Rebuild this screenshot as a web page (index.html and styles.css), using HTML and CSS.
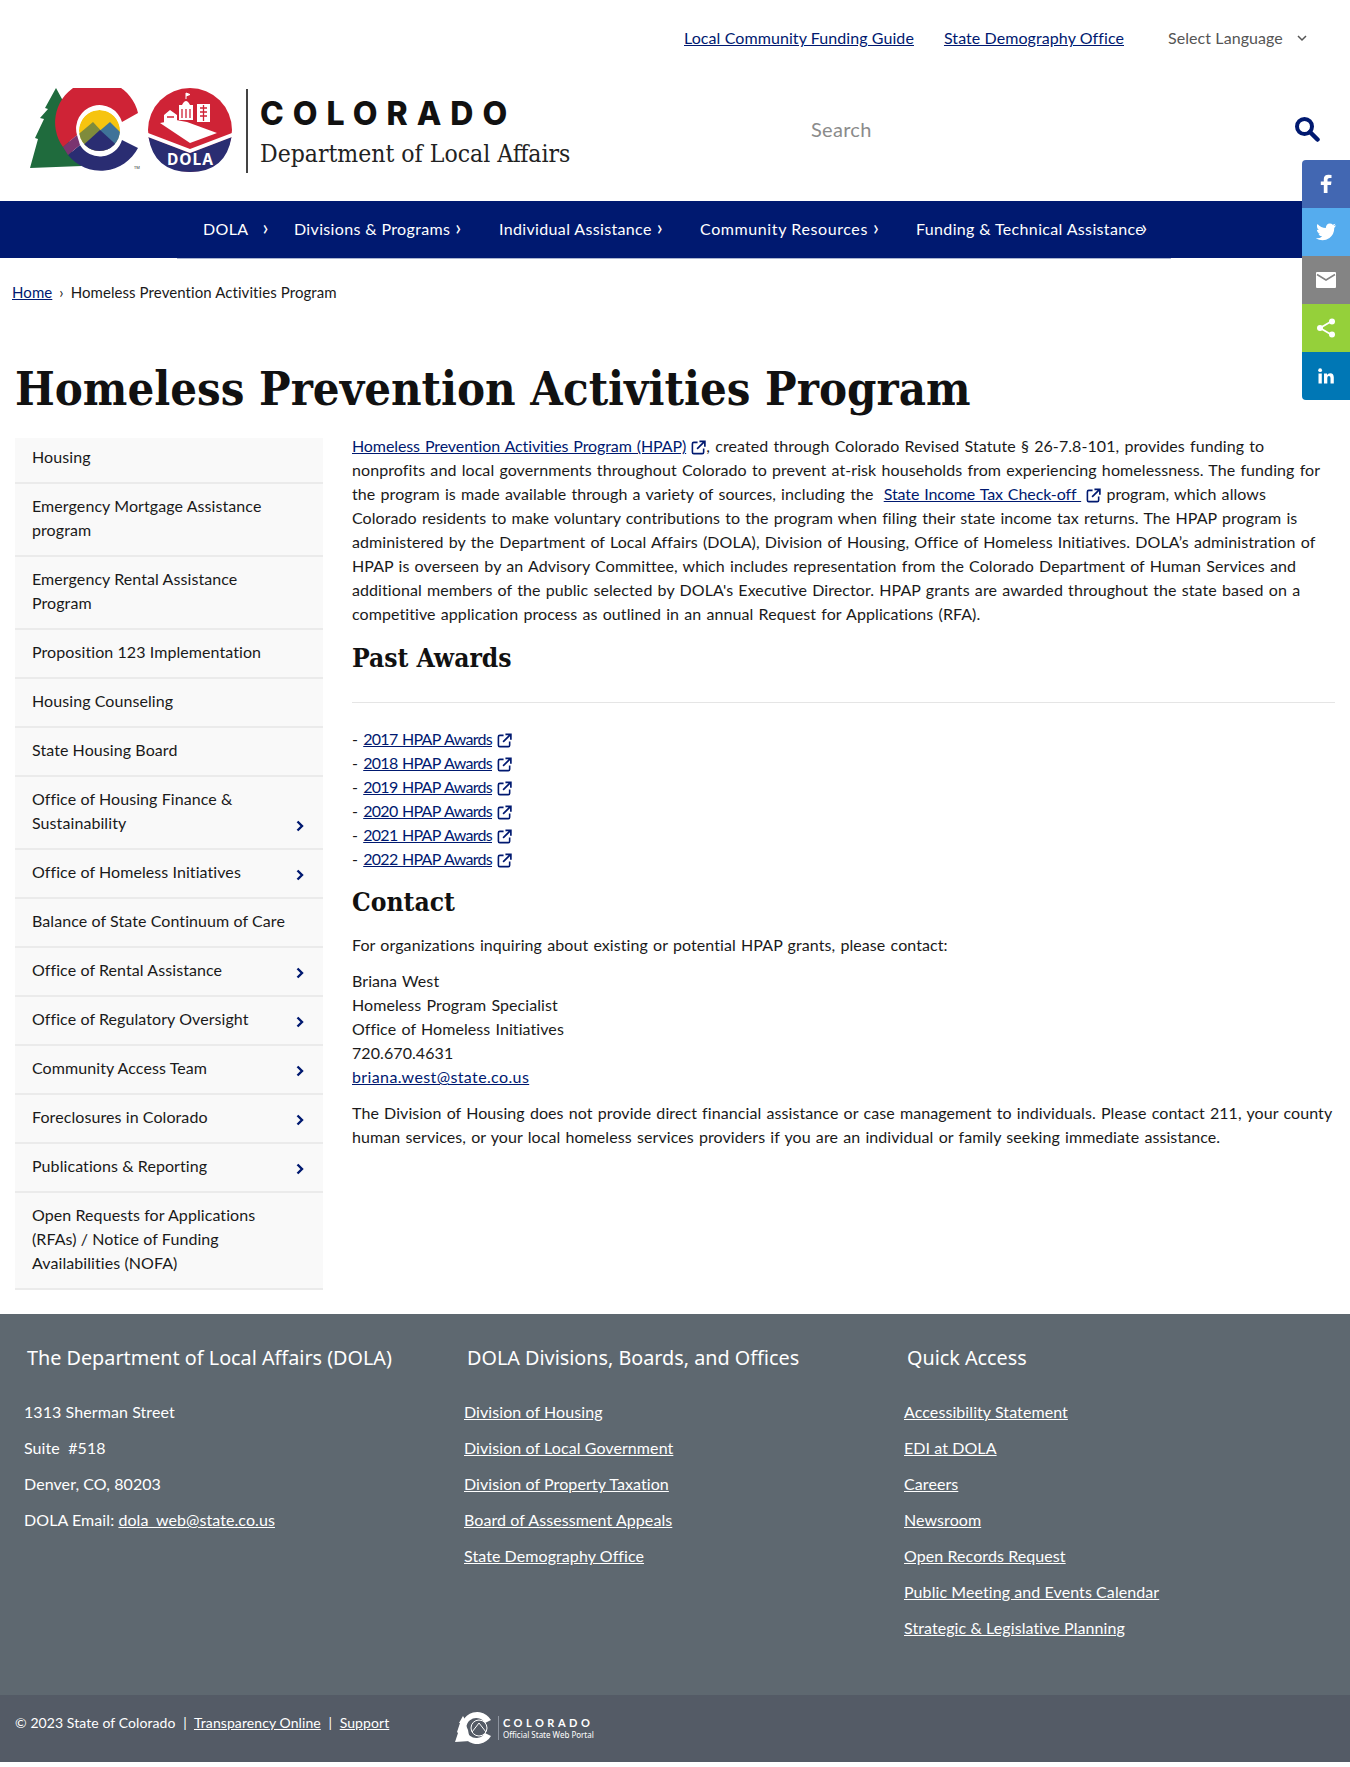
FILE: index.html
```html
<!DOCTYPE html>
<html lang="en">
<head>
    <meta charset="UTF-8">
    <meta name="viewport" content="width=device-width, initial-scale=1.0">
    <title>Homeless Prevention Activities Program</title>
    <link rel="stylesheet" href="styles.css">
</head>
<body>
    <svg class="icon-defs" width="0" height="0" aria-hidden="true">
        <symbol id="ext" viewBox="0 0 16 16">
            <path d="M7 2.500H3Q1.500 2.500 1.500 4V13Q1.500 14.500 3 14.500H12Q13.500 14.500 13.500 13V9" fill="none" stroke="currentColor" stroke-width="1.700"/>
            <path d="M6.500 9.500L14 2M9 1.500H14.800V7.300" fill="none" stroke="currentColor" stroke-width="1.800"/>
        </symbol>
        <symbol id="chev" viewBox="0 0 10 12">
            <path d="M2.500 1.500L7 6L2.500 10.500" fill="none" stroke="currentColor" stroke-width="2.400"/>
        </symbol>
        <clipPath id="peaks"><circle cx="69.500" cy="42.500" r="20.500"/></clipPath>
    </svg>

    <div class="top-links">
        <a href="#">Local Community Funding Guide</a>
        <a href="#">State Demography Office</a>
        <div class="lang">Select Language
            <svg width="10" height="7" viewBox="0 0 10 7"><path d="M1 1L5 5L9 1" fill="none" stroke="#555" stroke-width="1.500"/></svg>
        </div>
    </div>

    <header class="masthead">
        <div class="logo">
            <svg class="logo-mark" width="212" height="85" viewBox="0 0 212 85">
                <!-- tree -->
                <path d="M26 0L38 22L40 60L52 78L0 80L8 51L5 50L14 31L10 30L18 21L15 20Z" fill="#1f6b3d"/>
                <!-- C -->
                <path d="M108 25A42 42 0 1 0 33 59L47 47A23 23 0 0 1 92 34Z" fill="#cf2336"/>
                <path d="M108 60A42 42 0 0 1 38 67L50 57A23 23 0 0 0 92 52Z" fill="#2a2d72"/>
                <path d="M33 59L47 47L50 57L38 67Z" fill="#7a3470"/>
                <!-- mountains -->
                <g clip-path="url(#peaks)">
                    <circle cx="69.500" cy="42.500" r="20.500" fill="#f6c40f"/>
                    <path d="M44 50L63 34L76 48L62 66Z" fill="#7f8b3c"/>
                    <path d="M66 46L80 34L96 50L80 66Z" fill="#3f7398"/>
                    <path d="M48 62L70 42L92 62L70 70Z" fill="#2a2d72"/>
                </g>
                <text x="104" y="81" class="tm">TM</text>
                <!-- seal -->
                <circle cx="160" cy="42" r="42" fill="#cf2336"/>
                <path d="M118.500 49L160 65L201.500 49Q196 84 160 84Q124 84 118.500 49Z" fill="#2a2d72"/>
                <path d="M118 45L160 61L202 45V49L160 65L118 49Z" fill="#fff"/>
                <path d="M130 35L146 32L157 34L187 45L160 55Z" fill="#fff"/>
                <path d="M149 17H163V32H149ZM167 16H180V34H167ZM134 27L140 22L147 27V35H134Z" fill="#fff"/>
                <path d="M152 17Q156 9 160 17Z" fill="#fff"/>
                <path d="M156 11V5L160 6.500L156 8" fill="#fff" stroke="#fff"/>
                <path d="M152 21V30M156 21V30M160 21V30M170 20H177M170 24H177M170 28H177M173.500 17V33M137 29H144" stroke="#cf2336" stroke-width="1.300"/>
                <text x="160.500" y="77" class="seal-text" text-anchor="middle">DOLA</text>
            </svg>
            <div class="logo-text">
                <div class="logo-state">COLORADO</div>
                <div class="logo-dept">Department of Local Affairs</div>
            </div>
        </div>
        <div class="search">
            <span class="search-label">Search</span>
            <svg width="26" height="26" viewBox="0 0 26 26"><circle cx="10.500" cy="10.500" r="7.500" fill="none" stroke="#001970" stroke-width="4"/><path d="M16 16L23.500 23.500" stroke="#001970" stroke-width="4.500" stroke-linecap="round"/></svg>
        </div>
    </header>

    <nav class="main-nav">
        <a href="#" class="n1">DOLA</a>
        <a href="#" class="n2">Divisions &amp; Programs</a>
        <a href="#" class="n3">Individual Assistance</a>
        <a href="#" class="n4">Community Resources</a>
        <a href="#" class="n5">Funding &amp; Technical Assistance</a>
    </nav>

    <div class="breadcrumb"><a href="#">Home</a><span class="sep">›</span>Homeless Prevention Activities Program</div>

    <h1>Homeless Prevention Activities Program</h1>

    <div class="layout">
        <ul class="side">
            <li>Housing</li>
            <li>Emergency Mortgage Assistance program</li>
            <li>Emergency Rental Assistance Program</li>
            <li>Proposition 123 Implementation</li>
            <li>Housing Counseling</li>
            <li>State Housing Board</li>
            <li class="more">Office of Housing Finance &amp; Sustainability<svg><use href="#chev"/></svg></li>
            <li class="more">Office of Homeless Initiatives<svg><use href="#chev"/></svg></li>
            <li>Balance of State Continuum of Care</li>
            <li class="more">Office of Rental Assistance<svg><use href="#chev"/></svg></li>
            <li class="more">Office of Regulatory Oversight<svg><use href="#chev"/></svg></li>
            <li class="more">Community Access Team<svg><use href="#chev"/></svg></li>
            <li class="more">Foreclosures in Colorado<svg><use href="#chev"/></svg></li>
            <li class="more">Publications &amp; Reporting<svg><use href="#chev"/></svg></li>
            <li>Open Requests for Applications (RFAs) / Notice of Funding Availabilities (NOFA)</li>
        </ul>
        <main class="content">
            <p class="intro"><a href="#">Homeless Prevention Activities Program (HPAP)</a> <svg class="ext"><use href="#ext"/></svg>, created through Colorado Revised Statute § 26-7.8-101, provides funding to nonprofits and local governments throughout Colorado to prevent at-risk households from experiencing homelessness. The funding for the program is made available through a variety of sources, including the <a href="#" class="tax">State Income Tax Check-off&nbsp;</a> <svg class="ext tax-ext"><use href="#ext"/></svg>program, which allows Colorado residents to make voluntary contributions to the program when filing their state income tax returns. The HPAP program is administered by the Department of Local Affairs (DOLA), Division of Housing, Office of Homeless Initiatives. DOLA’s administration of HPAP is overseen by an Advisory Committee, which includes representation from the Colorado Department of Human Services and additional members of the public selected by DOLA's Executive Director. HPAP grants are awarded throughout the state based on a competitive application process as outlined in an annual Request for Applications (RFA).</p>
            <h2>Past Awards</h2>
            <hr>
            <p class="awards">
                - <a href="#">2017 HPAP Awards</a> <svg class="ext"><use href="#ext"/></svg><br>
                - <a href="#">2018 HPAP Awards</a> <svg class="ext"><use href="#ext"/></svg><br>
                - <a href="#">2019 HPAP Awards</a> <svg class="ext"><use href="#ext"/></svg><br>
                - <a href="#">2020 HPAP Awards</a> <svg class="ext"><use href="#ext"/></svg><br>
                - <a href="#">2021 HPAP Awards</a> <svg class="ext"><use href="#ext"/></svg><br>
                - <a href="#">2022 HPAP Awards</a> <svg class="ext"><use href="#ext"/></svg>
            </p>
            <h2 class="contact">Contact</h2>
            <p>For organizations inquiring about existing or potential HPAP grants, please contact:</p>
            <p>Briana West<br>Homeless Program Specialist<br>Office of Homeless Initiatives<br>720.670.4631<br><a href="#" class="mail">briana.west@state.co.us</a></p>
            <p>The Division of Housing does not provide direct financial assistance or case management to individuals. Please contact 211, your county human services, or your local homeless services providers if you are an individual or family seeking immediate assistance.</p>
        </main>
    </div>

    <footer class="site-footer">
        <div class="foot-cols">
            <div class="foot-col">
                <h3>The Department of Local Affairs (DOLA)</h3>
                <div>1313 Sherman Street</div>
                <div>Suite &nbsp;#518</div>
                <div>Denver, CO, 80203</div>
                <div>DOLA Email: <a href="#">dola_web@state.co.us</a></div>
            </div>
            <div class="foot-col">
                <h3>DOLA Divisions, Boards, and Offices</h3>
                <div><a href="#">Division of Housing</a></div>
                <div><a href="#">Division of Local Government</a></div>
                <div><a href="#">Division of Property Taxation</a></div>
                <div><a href="#">Board of Assessment Appeals</a></div>
                <div><a href="#">State Demography Office</a></div>
            </div>
            <div class="foot-col">
                <h3>Quick Access</h3>
                <div><a href="#">Accessibility Statement</a></div>
                <div><a href="#">EDI at DOLA</a></div>
                <div><a href="#">Careers</a></div>
                <div><a href="#">Newsroom</a></div>
                <div><a href="#">Open Records Request</a></div>
                <div><a href="#">Public Meeting and Events Calendar</a></div>
                <div><a href="#">Strategic &amp; Legislative Planning</a></div>
            </div>
        </div>
        <div class="foot-bottom">
            <div class="foot-legal">© 2023 State of Colorado <span>|</span> <a href="#">Transparency Online</a> <span>|</span> <a href="#">Support</a></div>
            <div class="foot-portal">
                <svg width="38" height="34" viewBox="0 0 38 34">
                    <path d="M8 5L12 12L10 12L13 19L15 30L0 31L3 22L2 21L5 12L4 12Z" fill="#fff"/>
                    <path d="M36 9A16 16 0 1 0 36 25L30 22A10 10 0 1 1 30 12Z" fill="#fff"/>
                    <circle cx="24" cy="17" r="8" fill="none" stroke="#fff"/>
                    <path d="M17 21L24 12L31 21" fill="none" stroke="#fff"/>
                </svg>
                <div class="portal-text">
                    <div class="portal-state">COLORADO</div>
                    <div class="portal-sub">Official State Web Portal</div>
                </div>
            </div>
        </div>
    </footer>

    <div class="share">
        <a href="#" class="s-fb"><svg width="12" height="20" viewBox="0 0 12 20"><path d="M7.500 19V11H11L11.500 7.500H7.500V5.500Q7.500 4 9.500 4H11.500V1Q10 .7 8.500 .7Q3.800 .7 3.800 5V7.500H.8V11H3.800V19Z" fill="#fff"/></svg></a>
        <a href="#" class="s-tw"><svg width="22" height="18" viewBox="0 0 22 18"><path d="M21 2.200Q19.800 2.800 18.600 2.900Q19.900 2.100 20.400 .7Q19.100 1.400 17.800 1.700Q16.600 .4 14.900 .4Q11 .6 10.800 5.100Q6 4.900 2.500 .9Q.9 4 3.700 6.900Q2.700 6.900 1.900 6.400Q2 9.800 5.200 10.600Q4.300 10.800 3.400 10.700Q4.400 13.300 7.200 13.500Q4.300 15.700 .6 15.300Q8 19.300 14.500 15Q19.500 11.200 19.200 4.900Q20.300 4 21 2.200Z" fill="#fff"/></svg></a>
        <a href="#" class="s-em"><svg width="20" height="16" viewBox="0 0 20 16"><path d="M1 0H19Q20 0 20 1V15Q20 16 19 16H1Q0 16 0 15V1Q0 0 1 0Z" fill="#fff"/><path d="M1 2.500L10 8L19 2.500" fill="none" stroke="#848484" stroke-width="1.500"/></svg></a>
        <a href="#" class="s-sh"><svg width="20" height="20" viewBox="0 0 20 20"><path d="M16 3L4 10L16 17" fill="none" stroke="#fff" stroke-width="1.800"/><circle cx="16" cy="3.500" r="3" fill="#fff"/><circle cx="4" cy="10" r="3" fill="#fff"/><circle cx="16" cy="16.500" r="3" fill="#fff"/></svg></a>
        <a href="#" class="s-in"><svg width="16" height="16" viewBox="0 0 16 16"><path d="M.5 5.500H3.800V15.500H.5ZM6 5.500H9V7Q10 5.200 12.200 5.200Q15.800 5.200 15.800 9.500V15.500H12.500V10Q12.500 8 10.900 8Q9.300 8 9.300 10V15.500H6Z" fill="#fff"/><circle cx="2.150" cy="2.200" r="1.900" fill="#fff"/></svg></a>
    </div>
</body>
</html>
```

FILE: styles.css
```css
/* base */
body {
    margin: 0;
    font-family: Lato, "Noto Sans", Arial, sans-serif;
    font-size: 16px;
    letter-spacing: 0.08px;
    line-height: 24px;
    color: #1a1a1a;
    background: #fff;
    position: relative;
}

a {
    color: #001970;
}

.icon-defs {
    display: block;
    height: 0;
}

/* top links */
.top-links {
    display: flex;
    align-items: center;
    height: 76px;
    padding-left: 684px;
    gap: 30px;
}

.lang {
    margin-left: 14px;
    color: #555;
    display: flex;
    align-items: center;
    gap: 14px;
}

/* logo + search */
.masthead {
    display: flex;
    align-items: center;
    height: 125px;
    box-sizing: border-box;
    padding: 0 0 16px 30px;
}

.logo {
    display: flex;
    align-items: center;
    width: 781px;
}

.logo-mark {
    flex: none;
}

.tm {
    font-family: "Noto Sans", sans-serif;
    font-size: 4px;
    fill: #333;
}

.seal-text {
    font-family: "Noto Sans", sans-serif;
    font-weight: 700;
    font-size: 15.500px;
    letter-spacing: 1px;
    fill: #fff;
}

.logo-text {
    margin-left: 4px;
    padding-left: 12px;
    border-left: 2px solid #444;
    height: 84px;
}

.logo-state {
    font-family: Inter, sans-serif;
    font-weight: 800;
    font-size: 32px;
    line-height: 46px;
    padding-top: 2px;
    margin-bottom: 2px;
    letter-spacing: 9px;
    color: #111;
}

.logo-dept {
    font-family: "DejaVu Serif Condensed", "DejaVu Serif", serif;
    font-size: 24.500px;
    line-height: 30px;
    letter-spacing: 0;
    color: #222;
}

.search {
    width: 509px;
    margin-bottom: 4px;
    display: flex;
    align-items: center;
    justify-content: space-between;
    font-size: 20px;
    letter-spacing: 0.3px;
    color: #8b8b8b;
}

/* main nav */
.main-nav {
    background: #001970;
    height: 57px;
    display: flex;
    align-items: center;
    padding-left: 203px;
    position: relative;
    letter-spacing: 0.35px;
}

.main-nav::after {
    content: "";
    position: absolute;
    left: 177px;
    width: 994px;
    bottom: -1px;
    height: 1px;
    background: #aab4cf;
}

.main-nav a {
    color: #fff;
    text-decoration: none;
    white-space: nowrap;
    flex: none;
    margin-top: -2px;
}

.main-nav a::after {
    content: "›";
    margin-left: 5px;
    font-size: 21px;
    line-height: 0;
}

.n1 { width: 91px; }
.n2 { width: 205px; }
.n3 { width: 201px; }
.n4 { width: 216px; letter-spacing: 0.6px; }

.main-nav .n1::after { margin-left: 14px; }
.main-nav .n5::after { margin-left: -3px; }

/* breadcrumb + title */
.breadcrumb {
    padding: 22px 0 0 12px;
    font-size: 15px;
    height: 47px;
}

.sep {
    margin: 0 7px;
}

h1 {
    margin: 0;
    padding: 29px 0 0 15px;
    font-family: "DejaVu Serif Condensed", "DejaVu Serif", serif;
    font-weight: 700;
    font-size: 46.800px;
    letter-spacing: 0;
    line-height: 66px;
    color: #111;
}

/* two columns */
.layout {
    display: flex;
    margin-top: 16px;
    padding: 0 15px;
    gap: 29px;
}

.side {
    list-style: none;
    margin: 0;
    padding: 0;
    width: 308px;
    flex: none;
}

.side li {
    background: #f9f9f9;
    border-bottom: 2px solid #ebebeb;
    padding: 10px 30px 13px 17px;
    position: relative;
}

.side li:first-child {
    padding-top: 7px;
}

.side li svg {
    position: absolute;
    right: 18px;
    bottom: 16px;
    width: 10px;
    height: 12px;
    color: #001970;
}

.content {
    flex: 1;
    min-width: 0;
    margin-top: -4px;
    word-spacing: 1px;
}

.content p {
    margin: 0 0 12px;
}

.intro a {
    letter-spacing: -0.1px;
}

.intro .tax {
    margin-left: 5px;
}

.tax-ext {
    margin-right: 5px;
}

.content .awards {
    margin-bottom: 13px;
}

.awards a {
    letter-spacing: -0.7px;
}

.mail {
    letter-spacing: 0.38px;
}

.content h2 {
    margin: 14px 0 0;
    font-family: "DejaVu Serif Condensed", "DejaVu Serif", serif;
    font-size: 26.200px;
    letter-spacing: 0;
    word-spacing: 0;
    line-height: 36px;
    color: #111;
}

.content hr {
    border: 0;
    border-top: 1px solid #e5e5e5;
    margin: 26px 0 24px;
}

.content h2.contact {
    margin: 0 0 13px;
}

.ext {
    width: 15px;
    height: 15px;
    vertical-align: -3px;
    color: #001970;
}

/* footer */
.site-footer {
    margin-top: 24px;
    background: #5e6870;
    color: #fff;
}

.site-footer a {
    color: #fff;
}

.foot-cols {
    display: flex;
    height: 381px;
    box-sizing: border-box;
    padding: 30px 0 0 24px;
}

.foot-col {
    width: 440px;
}

.foot-col h3 {
    margin: 0 0 22px 3px;
    font-family: "Noto Sans", sans-serif;
    font-weight: 400;
    font-size: 19.800px;
    letter-spacing: 0;
    line-height: 28px;
}

.foot-col div {
    height: 36px;
    line-height: 36px;
}

.foot-bottom {
    background: #545b66;
    height: 67px;
    margin-bottom: 5px;
    display: flex;
    padding-left: 15px;
    font-size: 14px;
}

.foot-legal {
    width: 440px;
    padding-top: 16px;
}

.foot-legal span {
    margin: 0 4px;
}

.foot-portal {
    display: flex;
    align-items: center;
    gap: 5px;
    padding-bottom: 2px;
}

.portal-text {
    border-left: 1px solid #8e95a0;
    padding-left: 4px;
}

.portal-state {
    font-weight: 700;
    font-size: 11px;
    line-height: 14px;
    letter-spacing: 3.500px;
}

.portal-sub {
    font-family: "Noto Sans", sans-serif;
    font-size: 8px;
    line-height: 10px;
    letter-spacing: 0;
}

/* share bar */
.share {
    position: absolute;
    top: 160px;
    right: 0;
    width: 48px;
    border-radius: 4px 0 0 4px;
    overflow: hidden;
}

.share a {
    display: flex;
    align-items: center;
    justify-content: center;
    height: 48px;
}

.s-fb { background: #4267b2; }
.s-tw { background: #55acee; }
.s-em { background: #848484; }
.s-sh { background: #95d03a; }
.s-in { background: #0077b5; }
```
